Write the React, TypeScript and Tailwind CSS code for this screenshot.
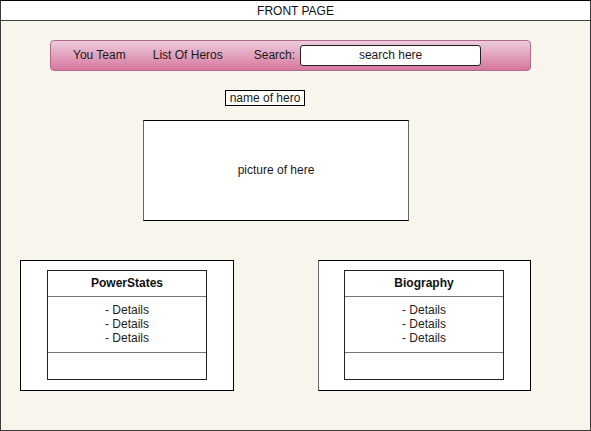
const font = { fontFamily: '"Liberation Sans", Arial, sans-serif' };

function InfoCard({ title, wide }: { title: string; wide?: boolean }) {
  return (
    <div
      className={
        wide
          ? "flex h-[131px] w-[214px] flex-col border border-black bg-white pl-[26px] pt-[9px]"
          : "flex h-[131px] w-[213px] flex-col border border-black border-l-[#666] bg-white pl-[25px] pt-[9px]"
      }
    >
      <div className="flex h-[110px] w-[160px] flex-col border border-[#222]">
        <div className="flex h-[26px] items-center justify-center border-b border-[#777] pb-[1px] text-[12px] font-bold text-[#111]">
          {title}
        </div>
        <div className="flex h-[56px] flex-col items-center border-b border-[#777] pt-[6px] text-[12px] leading-[14px] text-[#222]">
          <span>- Details</span>
          <span>- Details</span>
          <span>- Details</span>
        </div>
      </div>
    </div>
  );
}

export default function App() {
  return (
    <div
      style={font}
      className="flex h-[431px] w-[591px] flex-col border border-[#3a3a3a] border-t-black bg-[#f8f5ec] text-[#1a1a1a]"
    >
      <div className="flex h-[20px] shrink-0 items-center justify-center border-b border-[#444] bg-white text-[12px] text-[#111]">
        FRONT PAGE
      </div>

      <nav className="ml-[49px] mt-[19px] flex h-[31px] w-[481px] items-center rounded-[4px] border border-[#b06a8d] bg-gradient-to-b from-[#ecccdc] to-[#d5769e] pb-[1px] text-[12px]">
        <span className="ml-[22px] pb-[1px]">You Team</span>
        <span className="ml-[27px] pb-[1px]">List Of Heros</span>
        <span className="ml-[31px] pb-[1px]">Search:</span>
        <div className="ml-[5px] flex h-[21px] w-[181px] items-center justify-center rounded-[3px] border border-[#222] bg-white pb-[1px]">
          search here
        </div>
      </nav>

      <div className="ml-[224px] mt-[19px] flex h-[16px] w-[80px] items-center justify-center border border-black bg-white text-[12px]">
        name of hero
      </div>

      <div className="ml-[142px] mt-[14px] flex h-[101px] w-[266px] items-center justify-center border border-black border-x-[#666] bg-white pb-[2px] text-[12px]">
        picture of here
      </div>

      <div className="ml-[19px] mt-[39px] flex gap-[84px]">
        <InfoCard title="PowerStates" wide />
        <InfoCard title="Biography" />
      </div>
    </div>
  );
}
